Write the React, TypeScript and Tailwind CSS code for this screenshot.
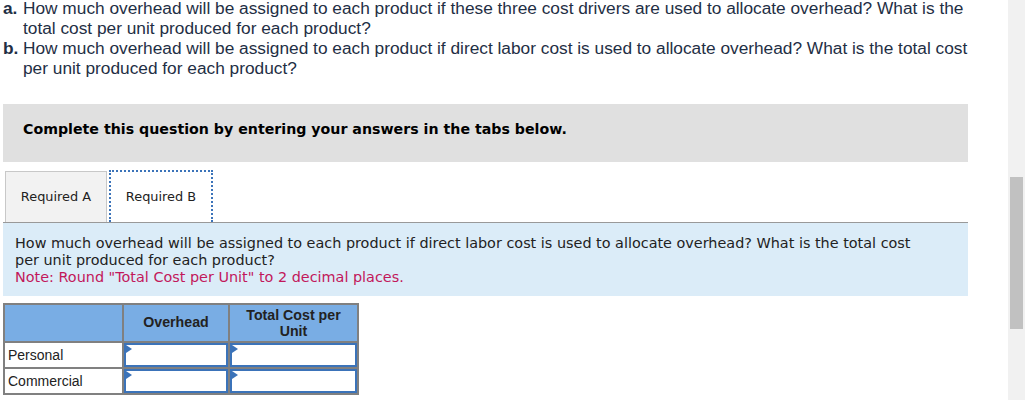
import React from 'react';

const ROWS = ['Personal', 'Commercial'];

function AnswerCell() {
  return (
    <td className="border-2 border-[#808080] p-0">
      <div className="relative h-[24px] border-2 border-[#3b73b9] bg-white">
        <span className="absolute left-0 top-0 h-0 w-0 border-y-[4px] border-l-[6px] border-y-transparent border-l-[#3b73b9]" />
      </div>
    </td>
  );
}

export default function App() {
  return (
    <div className="flex h-[400px] w-[1030px] bg-white">
      <div className="w-[1008px] pl-[3px] pr-[40px]">
        <ol className="-mt-[2px] text-[17.3px] leading-[20px] text-[#1f2f45] [font-family:'Liberation_Sans',Arial,sans-serif]">
          <li className="flex">
            <span className="w-[20px] shrink-0 font-bold">a.</span>
            <span>
              How much overhead will be assigned to each product if these three cost drivers are used to allocate
              overhead? What is the total cost per unit produced for each product?
            </span>
          </li>
          <li className="flex">
            <span className="w-[20px] shrink-0 font-bold">b.</span>
            <span>
              How much overhead will be assigned to each product if direct labor cost is used to allocate overhead?
              What is the total cost per unit produced for each product?
            </span>
          </li>
        </ol>

        <div className="mt-[26px] h-[58px] bg-[#e0e0e0] px-[20px] pt-[15px] text-[14.2px] font-bold text-black [font-family:'DejaVu_Sans',Verdana,sans-serif]">
          Complete this question by entering your answers in the tabs below.
        </div>

        <div className="mt-[8px] flex items-end gap-[2px] border-b border-[#999] pl-[2px] text-[12.9px] text-[#222] [font-family:'DejaVu_Sans',Verdana,sans-serif]">
          <button type="button" className="flex h-[51px] w-[102px] items-center justify-center border border-b-0 border-[#c8c8c8] bg-[#f2f2f2]">
            Required A
          </button>
          <button type="button" className="flex h-[52px] w-[104px] items-center justify-center border-2 border-b-0 border-dotted border-[#3b73b9] bg-white">
            Required B
          </button>
        </div>

        <div className="bg-[#dbecf8] pb-[10px] pl-[12px] pr-[40px] pt-[12px] text-[14.4px] leading-[17px] text-[#222] [font-family:'DejaVu_Sans',Verdana,sans-serif]">
          <p>
            How much overhead will be assigned to each product if direct labor cost is used to allocate overhead? What is the total cost per unit produced for each product?
          </p>
          <p className="text-[#c2185b]">Note: Round "Total Cost per Unit" to 2 decimal places.</p>
        </div>

        <table className="mt-[7px] border-collapse border-2 border-[#808080] [font-family:'Liberation_Sans',Arial,sans-serif]">
          <thead>
            <tr className="h-[38px] bg-[#79ade4] text-[14.2px] font-bold text-[#222]">
              <th className="w-[119px] border-2 border-[#808080]" />
              <th className="w-[106px] border-2 border-[#808080] font-bold">Overhead</th>
              <th className="w-[129px] border-2 border-[#808080] leading-[16px] font-bold">
                Total Cost per
                <br />
                Unit
              </th>
            </tr>
          </thead>
          <tbody>
            {ROWS.map((r) => (
              <tr key={r} className="h-[26px]">
                <td className="border-2 border-[#808080] px-[3px] text-left text-[14px] font-normal text-[#222]">{r}</td>
                <AnswerCell />
                <AnswerCell />
              </tr>
            ))}
          </tbody>
        </table>
      </div>

      <div className="flex h-full w-[17px] flex-col bg-[#f1f1f1] px-[2px] pt-[177px]">
        <div className="h-[152px] bg-[#c1c1c1]" />
      </div>
    </div>
  );
}
